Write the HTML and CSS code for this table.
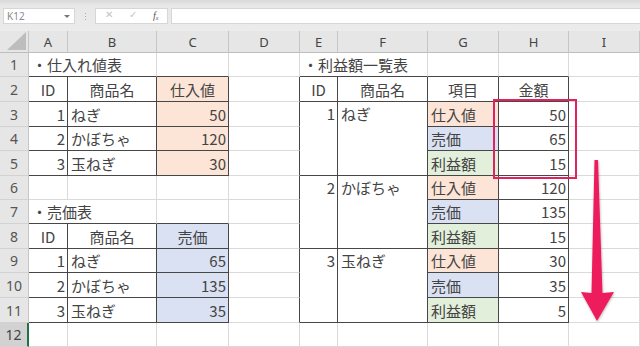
FILE: index.html
```html
<!DOCTYPE html>
<html lang="ja">
<head>
<meta charset="utf-8">
<title>利益額一覧表</title>
<link rel="stylesheet" href="styles.css">
</head>
<body>
<div class="toolbar">
  <div class="namebox"><span>K12</span><span class="caret"></span></div>
  <div class="sep"><i></i><i></i><i></i></div>
  <div class="fbtns">
    <span class="fb x">&#x2715;</span>
    <span class="fb ok">&#x2713;</span>
    <span class="fb fx">f<sub>x</sub></span>
  </div>
  <div class="finput"></div>
</div>
<div class="sheet">
  <div class="ch corner"><span class="tri"></span></div>
  <div class="ch">A</div><div class="ch">B</div><div class="ch">C</div><div class="ch">D</div><div class="ch">E</div><div class="ch">F</div><div class="ch">G</div><div class="ch">H</div><div class="ch">I</div>

  <div class="rh">1</div>
  <div class="c span2 bb">・仕入れ値表</div><div class="c bb"></div><div class="c"></div>
  <div class="c span2 bb">・利益額一覧表</div><div class="c bb"></div><div class="c bb"></div><div class="c"></div>

  <div class="rh">2</div>
  <div class="c t ctr">ID</div><div class="c t ctr">商品名</div><div class="c t ctr or">仕入値</div><div class="c br"></div>
  <div class="c t ctr">ID</div><div class="c t ctr">商品名</div><div class="c t ctr">項目</div><div class="c t ctr">金額</div><div class="c"></div>

  <div class="rh">3</div>
  <div class="c t r">1</div><div class="c t">ねぎ</div><div class="c t r or">50</div><div class="c br"></div>
  <div class="c t r m3">1</div><div class="c t m3">ねぎ</div><div class="c t or">仕入値</div><div class="c t r">50</div><div class="c"></div>

  <div class="rh">4</div>
  <div class="c t r">2</div><div class="c t">かぼちゃ</div><div class="c t r or">120</div><div class="c br"></div>
  <div class="c t bl">売価</div><div class="c t r">65</div><div class="c"></div>

  <div class="rh">5</div>
  <div class="c t r">3</div><div class="c t">玉ねぎ</div><div class="c t r or">30</div><div class="c br"></div>
  <div class="c t gr">利益額</div><div class="c t r">15</div><div class="c"></div>

  <div class="rh">6</div>
  <div class="c"></div><div class="c"></div><div class="c"></div><div class="c br"></div>
  <div class="c t r m3">2</div><div class="c t m3">かぼちゃ</div><div class="c t or">仕入値</div><div class="c t r">120</div><div class="c"></div>

  <div class="rh">7</div>
  <div class="c span2 bb">・売価表</div><div class="c bb"></div><div class="c br"></div>
  <div class="c t bl">売価</div><div class="c t r">135</div><div class="c"></div>

  <div class="rh">8</div>
  <div class="c t ctr">ID</div><div class="c t ctr">商品名</div><div class="c t ctr bl">売価</div><div class="c br"></div>
  <div class="c t gr">利益額</div><div class="c t r">15</div><div class="c"></div>

  <div class="rh">9</div>
  <div class="c t r">1</div><div class="c t">ねぎ</div><div class="c t r bl">65</div><div class="c br"></div>
  <div class="c t r m3">3</div><div class="c t m3">玉ねぎ</div><div class="c t or">仕入値</div><div class="c t r">30</div><div class="c"></div>

  <div class="rh">10</div>
  <div class="c t r">2</div><div class="c t">かぼちゃ</div><div class="c t r bl">135</div><div class="c br"></div>
  <div class="c t bl">売価</div><div class="c t r">35</div><div class="c"></div>

  <div class="rh">11</div>
  <div class="c t r">3</div><div class="c t">玉ねぎ</div><div class="c t r bl">35</div><div class="c br"></div>
  <div class="c t gr">利益額</div><div class="c t r">5</div><div class="c"></div>

  <div class="rh sel">12</div>
  <div class="c"></div><div class="c"></div><div class="c"></div><div class="c"></div><div class="c"></div><div class="c"></div><div class="c"></div><div class="c"></div><div class="c"></div>

  <div class="redbox"></div>
  <svg class="arrow" width="40" height="172" viewBox="0 0 40 172">
    <defs>
      <filter id="sh" x="-30%" y="-10%" width="160%" height="120%">
        <feDropShadow dx="0.5" dy="1" stdDeviation="1" flood-color="#000" flood-opacity="0.3"/>
      </filter>
    </defs>
    <polygon filter="url(#sh)" fill="#ec1c5d" points="16.5,4 20,4 24.5,137 36,136 19,165 3,136 13.5,137"/>
  </svg>
</div>
</body>
</html>
```

FILE: styles.css
```css
html, body {
  margin: 0;
  padding: 0;
  background: #fff;
}
body {
  width: 640px;
  height: 347px;
  overflow: hidden;
  font-family: "Noto Sans CJK JP", "Noto Sans", sans-serif;
}

/* ---------- formula bar ---------- */
.toolbar {
  height: 31px;
  box-sizing: border-box;
  padding-top: 8px;
  display: flex;
  align-items: flex-start;
  background: linear-gradient(#d9d9d9 0, #e8e8e8 6px, #ebebeb 100%);
}
.namebox {
  margin-left: 3px;
  width: 72px;
  height: 16px;
  box-sizing: border-box;
  background: #fff;
  border: 1px solid #d6d6d6;
  display: flex;
  align-items: center;
  justify-content: space-between;
  padding: 0 4px 0 3px;
  font: 10px "Noto Sans", sans-serif;
  color: #8a8a8a;
}
.caret {
  width: 0;
  height: 0;
  border-left: 3px solid transparent;
  border-right: 3px solid transparent;
  border-top: 3px solid #777;
}
.sep {
  width: 20px;
  height: 16px;
  display: flex;
  flex-direction: column;
  align-items: center;
  justify-content: center;
  gap: 2px;
}
.sep i {
  display: block;
  width: 1px;
  height: 1px;
  background: #aaa;
}
.fbtns {
  width: 73px;
  height: 16px;
  box-sizing: border-box;
  background: #fff;
  border: 1px solid #d6d6d6;
  display: flex;
  align-items: center;
  position: relative;
}
.fb {
  position: absolute;
  top: 0;
  line-height: 14px;
  font: 10px "DejaVu Sans", sans-serif;
  color: #c4c4c4;
}
.fb.x { left: 9px; }
.fb.ok { left: 33px; }
.fb.fx {
  left: 57px;
  font: italic 10px "Liberation Serif", serif;
  color: #555;
  line-height: 14px;
}
.fb.fx sub { font-size: 6px; vertical-align: -1px; }
.finput {
  margin-left: 3px;
  flex: 1;
  height: 16px;
  box-sizing: border-box;
  background: #fff;
  border: 1px solid #d6d6d6;
  border-right: none;
}

/* ---------- sheet grid ---------- */
.sheet {
  position: relative;
  display: grid;
  grid-template-columns: 29px 39px 89px 72px 71px 38px 90px 71px 70px 71px;
  grid-template-rows: 22px 24px 25px 25px 24px 25px 24px 24px 25px 24px 25px 25px 24px;
}
.ch {
  background: #e6e6e6;
  border-right: 1px solid #c6c6c6;
  border-bottom: 1px solid #bdbdbd;
  box-sizing: border-box;
  display: flex;
  align-items: center;
  justify-content: center;
  font: 13px "Noto Sans", sans-serif;
  color: #444;
  padding-top: 1px;
}
.corner {
  position: relative;
  border-right: 1px solid #c6c6c6;
}
.tri {
  position: absolute;
  right: 2px;
  bottom: 2px;
  width: 0;
  height: 0;
  border-left: 19px solid transparent;
  border-bottom: 18px solid #bdbdbd;
}
.rh {
  background: #e6e6e6;
  border-right: 1px solid #c6c6c6;
  border-bottom: 1px solid #d2d2d2;
  box-sizing: border-box;
  display: flex;
  align-items: center;
  justify-content: center;
  font: 14px "Noto Sans", sans-serif;
  color: #555;
}
.rh.sel {
  background: #d2d2d2;
  border-right: 2px solid #217346;
  color: #444;
}

.c {
  box-sizing: border-box;
  border-right: 1px solid #dadada;
  border-bottom: 1px solid #dadada;
  display: flex;
  align-items: center;
  padding: 0 3px;
  white-space: nowrap;
  font-size: 15px;
  color: #444;
  line-height: 1;
}
.span2 { grid-column: span 2; }
.m3 {
  grid-row: span 3;
  align-items: flex-start;
  padding-top: 4px;
}
/* table cell with dark borders */
.t {
  border-right-color: #474747;
  border-bottom-color: #474747;
}
.bb { border-bottom-color: #474747; }
.br { border-right-color: #474747; }
.r { justify-content: flex-end; padding-right: 2px; }
.ctr { justify-content: center; }
.or { background: #fce4d6; }
.bl { background: #d9e1f2; }
.gr { background: #e2efda; }

/* ---------- overlays ---------- */
.redbox {
  position: absolute;
  left: 493px;
  top: 68px;
  width: 84px;
  height: 80px;
  box-sizing: border-box;
  border: 2px solid #e2225f;
}
.arrow {
  position: absolute;
  left: 578px;
  top: 125px;
}
```
